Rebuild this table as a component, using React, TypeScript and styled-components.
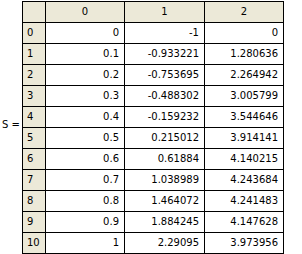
import React from "react";
import styled, { createGlobalStyle } from "styled-components";

const Global = createGlobalStyle`
  html, body { margin: 0; padding: 0; background: #fff; }
  body { font-family: "DejaVu Sans", Verdana, sans-serif; font-size: 10px; color: #000; }
`;

const Page = styled.div`
  display: flex;
  align-items: center;
  width: 302px;
  height: 254px;
`;

const Label = styled.div`
  width: 22px;
  padding-left: 2px;
  margin-bottom: 6px;
  box-sizing: border-box;
  font-size: 10px;
  white-space: nowrap;
`;

const Grid = styled.div`
  display: grid;
  grid-template-columns: 22px 78px 79px 78px;
  grid-auto-rows: 20px;
  gap: 1px;
  background: #000;
  border: 1px solid #000;
`;

const Cell = styled.div<{ $head?: boolean; $align: "left" | "center" | "right" }>`
  background: ${(p) => (p.$head ? "#ece9d8" : "#fff")};
  display: flex;
  align-items: center;
  justify-content: ${(p) =>
    p.$align === "left" ? "flex-start" : p.$align === "center" ? "center" : "flex-end"};
  padding: 0 ${(p) => (p.$align === "right" ? "5px" : "0")} 0 ${(p) => (p.$align === "left" ? "4px" : "0")};
  white-space: nowrap;
`;

const data: string[][] = [
  ["0", "-1", "0"],
  ["0.1", "-0.933221", "1.280636"],
  ["0.2", "-0.753695", "2.264942"],
  ["0.3", "-0.488302", "3.005799"],
  ["0.4", "-0.159232", "3.544646"],
  ["0.5", "0.215012", "3.914141"],
  ["0.6", "0.61884", "4.140215"],
  ["0.7", "1.038989", "4.243684"],
  ["0.8", "1.464072", "4.241483"],
  ["0.9", "1.884245", "4.147628"],
  ["1", "2.29095", "3.973956"],
];

export default function App() {
  return (
    <>
      <Global />
      <Page>
        <Label>S =</Label>
        <Grid>
          <Cell $head $align="center" />
          {["0", "1", "2"].map((h) => (
            <Cell key={h} $head $align="center">{h}</Cell>
          ))}
          {data.map((row, i) => (
            <React.Fragment key={i}>
              <Cell $head $align="left">{i}</Cell>
              {row.map((v, j) => (
                <Cell key={j} $align="right">{v}</Cell>
              ))}
            </React.Fragment>
          ))}
        </Grid>
      </Page>
    </>
  );
}
